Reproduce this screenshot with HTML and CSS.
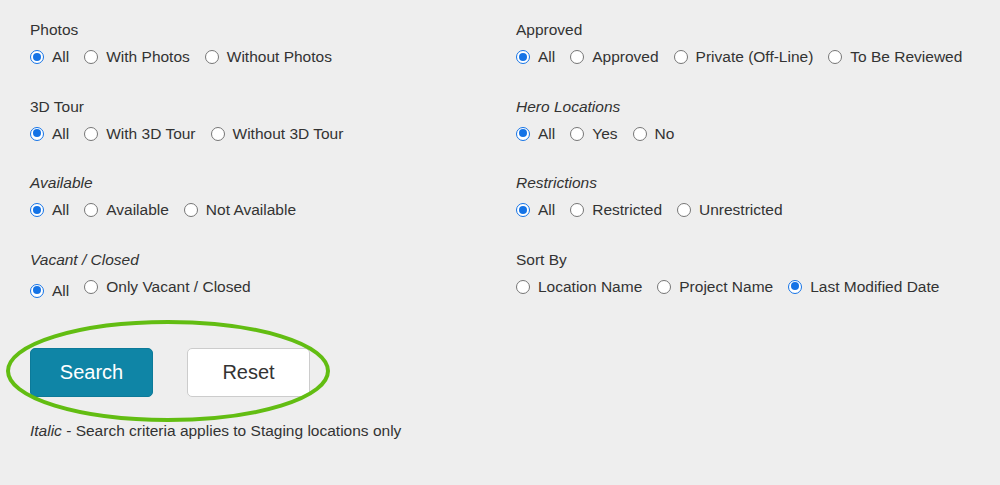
FILE: index.html
```html
<!DOCTYPE html>
<html>
<head>
<meta charset="utf-8">
<link rel="stylesheet" href="styles.css">
</head>
<body>
<div class="page">
  <div class="filters">
    <div class="group">
      <div class="label">Photos</div>
      <div class="options">
        <span class="opt"><span class="radio on"></span>All</span>
        <span class="opt"><span class="radio"></span>With Photos</span>
        <span class="opt"><span class="radio"></span>Without Photos</span>
      </div>
    </div>
    <div class="group">
      <div class="label">Approved</div>
      <div class="options">
        <span class="opt"><span class="radio on"></span>All</span>
        <span class="opt"><span class="radio"></span>Approved</span>
        <span class="opt"><span class="radio"></span>Private (Off-Line)</span>
        <span class="opt"><span class="radio"></span>To Be Reviewed</span>
      </div>
    </div>
    <div class="group">
      <div class="label">3D Tour</div>
      <div class="options">
        <span class="opt"><span class="radio on"></span>All</span>
        <span class="opt"><span class="radio"></span>With 3D Tour</span>
        <span class="opt"><span class="radio"></span>Without 3D Tour</span>
      </div>
    </div>
    <div class="group">
      <div class="label italic">Hero Locations</div>
      <div class="options">
        <span class="opt"><span class="radio on"></span>All</span>
        <span class="opt"><span class="radio"></span>Yes</span>
        <span class="opt"><span class="radio"></span>No</span>
      </div>
    </div>
    <div class="group">
      <div class="label italic">Available</div>
      <div class="options">
        <span class="opt"><span class="radio on"></span>All</span>
        <span class="opt"><span class="radio"></span>Available</span>
        <span class="opt"><span class="radio"></span>Not Available</span>
      </div>
    </div>
    <div class="group">
      <div class="label italic">Restrictions</div>
      <div class="options">
        <span class="opt"><span class="radio on"></span>All</span>
        <span class="opt"><span class="radio"></span>Restricted</span>
        <span class="opt"><span class="radio"></span>Unrestricted</span>
      </div>
    </div>
    <div class="group">
      <div class="label italic">Vacant / Closed</div>
      <div class="options">
        <span class="opt low"><span class="radio on"></span>All</span>
        <span class="opt"><span class="radio"></span>Only Vacant / Closed</span>
      </div>
    </div>
    <div class="group">
      <div class="label">Sort By</div>
      <div class="options">
        <span class="opt"><span class="radio"></span>Location Name</span>
        <span class="opt"><span class="radio"></span>Project Name</span>
        <span class="opt"><span class="radio on"></span>Last Modified Date</span>
      </div>
    </div>
  </div>

  <div class="actions">
    <button class="btn btn-primary">Search</button>
    <button class="btn btn-default">Reset</button>
    <svg class="highlight" width="330" height="106" viewBox="0 0 330 106">
      <ellipse cx="164" cy="52" rx="160" ry="49" fill="none" stroke="#62bd12" stroke-width="4"/>
    </svg>
  </div>

  <p class="note"><em>Italic</em> - Search criteria applies to Staging locations only</p>
</div>
</body>
</html>
```
FILE: styles.css
```css
html, body {
  margin: 0;
  padding: 0;
  background: #eeeeee;
}
body {
  font-family: "Liberation Sans", Arial, sans-serif;
  font-size: 15.5px;
  color: #333333;
}
.page {
  padding: 20px 0 0 30px;
  width: 970px;
  height: 465px;
}
.filters {
  display: grid;
  grid-template-columns: 486px 1fr;
  row-gap: 29.5px;
}
.group {
  display: flex;
  flex-direction: column;
  gap: 7px;
}
.label {
  line-height: 20px;
  height: 20px;
}
.italic {
  font-style: italic;
}
.options {
  display: flex;
  align-items: center;
  height: 20px;
  line-height: 20px;
}
.opt {
  display: inline-flex;
  align-items: center;
  margin-right: 15px;
}
.opt.low {
  position: relative;
  top: 4px;
}
.radio {
  box-sizing: border-box;
  width: 14px;
  height: 14px;
  border-radius: 50%;
  border: 1px solid #767676;
  background: #ffffff;
  margin-right: 8px;
  position: relative;
}
.radio.on {
  border: 1.5px solid #1473e6;
  background: #ffffff;
}
.radio.on::after {
  content: "";
  position: absolute;
  left: 1.5px;
  top: 1.5px;
  width: 8px;
  height: 8px;
  border-radius: 50%;
  background: #1473e6;
}
.actions {
  position: relative;
  display: flex;
  gap: 34px;
  margin-top: 51px;
}
.btn {
  font-family: "Liberation Sans", Arial, sans-serif;
  font-size: 20px;
  height: 49px;
  border-radius: 5px;
  cursor: pointer;
  padding: 0;
}
.btn-primary {
  width: 123px;
  background: #0f85a6;
  border: 1px solid #0c7a99;
  color: #ffffff;
}
.btn-default {
  width: 123px;
  background: #ffffff;
  border: 1px solid #cccccc;
  color: #333333;
}
.highlight {
  position: absolute;
  left: -26px;
  top: -29px;
  pointer-events: none;
}
.note {
  margin: 24px 0 0 0;
  line-height: 20px;
}
```
